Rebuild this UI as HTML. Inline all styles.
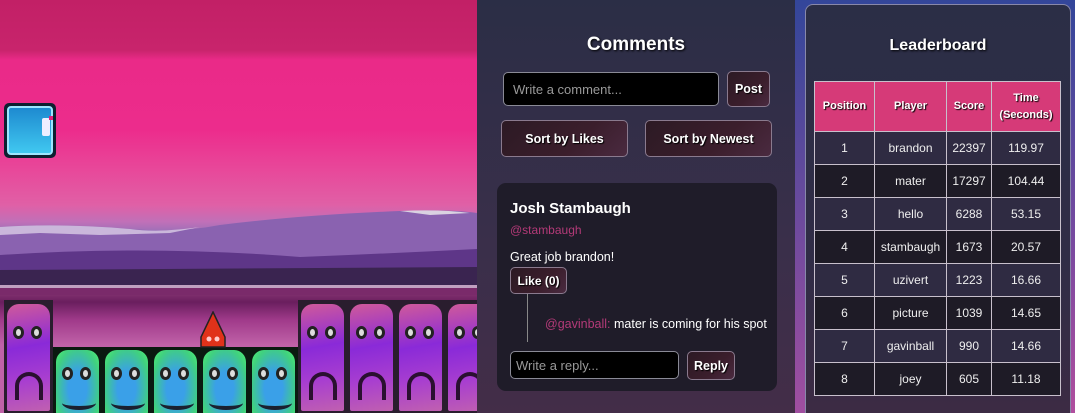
<!DOCTYPE html>
<html><head><style>
*{margin:0;padding:0;box-sizing:border-box}
html,body{width:1075px;height:413px;overflow:hidden}
body{position:relative;font-family:"Liberation Sans",sans-serif;background:linear-gradient(180deg,#33469a 0%,#7a4aa0 60%,#b04e9e 100%)}
.abs{position:absolute}
#game{left:0;top:0;width:477px;height:413px;overflow:hidden;background:linear-gradient(180deg,#c22066 0px,#c8246c 50px,#ea2a88 60px,#ec2c8c 130px,#e8489a 170px,#e060a6 205px,#c070b8 222px,#9070b8 235px,#6a3f8e 260px,#4a2a62 275px,#3a2450 288px,#b89ab8 291px,#80306e 294px,#6a1e5e 302px,#a03a8a 320px,#c062a8 345px)}
.pt{position:absolute;width:49px;height:115px;top:300px;background:#2a1d2e;padding:4px 3px}
.pt>div{width:100%;height:100%;border-radius:12px 12px 2px 2px;background:linear-gradient(170deg,#d05a9a,#8a2ad8 40%,#a83ed0 70%,#c060b0);position:relative}
.gt{position:absolute;width:49px;height:70px;top:347px;background:#0a1a10;padding:3px}
.gt>div{width:100%;height:100%;border-radius:12px 12px 2px 2px;background:radial-gradient(ellipse at 50% 60%,#3aa0e8 30%,#40d080 75%,#50f070);position:relative}
.eye{position:absolute;width:11px;height:13px;border-radius:50%;background:#ddd;border:3px solid #222}
.frown{position:absolute;left:8px;top:68px;width:28px;height:28px;border:4px solid #2a1030;border-bottom:none;border-radius:50% 50% 0 0}
.smile{position:absolute;left:6px;top:46px;width:34px;height:14px;border-bottom:4px solid #1a2030;border-radius:0 0 50% 50%}
#cm{left:477px;top:0;width:318px;height:413px;background:linear-gradient(180deg,#2b2e46,#3a2f4a 60%,#432d48)}
#lb{left:805px;top:4px;width:266px;height:420px;border:1px solid #8888aa;border-radius:8px;background:linear-gradient(180deg,#2b2e46,#302c46 60%,#3d2b44)}
h2{color:#fff;font-weight:900;font-size:19px;text-align:center;text-shadow:1px 1px 2px #000}
.btn{position:absolute;border:1px solid #8a7a8e;border-radius:5px;color:#fff;font-size:12.5px;font-weight:bold;display:flex;align-items:center;justify-content:center;background:linear-gradient(135deg,#2c1a24,#3b1e2c 60%,#4a2a40);text-shadow:1px 1px 1px #000}
.inp{position:absolute;background:#000;border:1px solid #8a8a96;border-radius:5px;color:#999;font-size:13px;padding-left:9px;display:flex;align-items:center}
table{border-collapse:collapse;position:absolute;left:8px;top:76px;width:247px;font-size:12px;color:#eee;text-align:center}
td,th{border:1px solid #c8c0cc;height:33px}
th{background:#d63a78;color:#fff;font-size:11px;font-weight:900;height:50px;text-shadow:1px 1px 1px #000;line-height:17px}
tr:nth-child(even) td{background:#2f2b42}
tr:nth-child(odd) td{background:#1e1b26}
</style></head><body>
<div id="game" class="abs">
<svg class="abs" style="left:0;top:205px" width="477" height="90"><path d="M0 22 Q60 18 130 24 Q180 28 220 20 Q300 10 400 6 Q450 4 477 8 L477 90 L0 90 Z" fill="#8a62b0"/><path d="M0 22 Q60 18 130 24 Q160 28 200 22 L170 28 L100 30 L40 28 L0 30Z" fill="#e6dcee" opacity=".7"/><path d="M400 6 Q440 4 470 8 L430 10Z" fill="#eee" opacity=".8"/><path d="M0 50 Q150 40 300 52 Q400 48 477 44 L477 90 L0 90Z" fill="#5e3688"/><path d="M0 65 L477 62 L477 90 L0 90Z" fill="#3a2450"/><rect x="0" y="80" width="477" height="3" fill="#c0a0c0"/><rect x="0" y="83" width="477" height="7" fill="#7a2a6a"/></svg>
<div class="abs" style="left:4px;top:103px;width:52px;height:55px;border-radius:5px;background:#0c2030;padding:3px"><div style="width:100%;height:100%;border-radius:4px;background:linear-gradient(180deg,#1e8ad0,#40c8f0);border:2px solid #9ee6ff;position:relative"><div style="position:absolute;left:33px;top:10px;width:8px;height:18px;background:#eef;border-radius:2px"></div><div style="position:absolute;left:40px;top:8px;width:4px;height:4px;background:#e0207a"></div></div></div>
<div class="pt" style="left:4px"><div><div class="eye" style="left:6px;top:22px"></div><div class="eye" style="left:24px;top:22px"></div><div class="frown"></div></div></div>
<div class="pt" style="left:298px"><div><div class="eye" style="left:6px;top:22px"></div><div class="eye" style="left:24px;top:22px"></div><div class="frown"></div></div></div>
<div class="pt" style="left:347px"><div><div class="eye" style="left:6px;top:22px"></div><div class="eye" style="left:24px;top:22px"></div><div class="frown"></div></div></div>
<div class="pt" style="left:396px"><div><div class="eye" style="left:6px;top:22px"></div><div class="eye" style="left:24px;top:22px"></div><div class="frown"></div></div></div>
<div class="pt" style="left:445px"><div><div class="eye" style="left:6px;top:22px"></div><div class="eye" style="left:24px;top:22px"></div><div class="frown"></div></div></div>
<div class="gt" style="left:53px"><div><div class="eye" style="left:6px;top:17px"></div><div class="eye" style="left:24px;top:17px"></div><div class="smile"></div></div></div>
<div class="gt" style="left:102px"><div><div class="eye" style="left:6px;top:17px"></div><div class="eye" style="left:24px;top:17px"></div><div class="smile"></div></div></div>
<div class="gt" style="left:151px"><div><div class="eye" style="left:6px;top:17px"></div><div class="eye" style="left:24px;top:17px"></div><div class="smile"></div></div></div>
<div class="gt" style="left:200px"><div><div class="eye" style="left:6px;top:17px"></div><div class="eye" style="left:24px;top:17px"></div><div class="smile"></div></div></div>
<div class="gt" style="left:249px"><div><div class="eye" style="left:6px;top:17px"></div><div class="eye" style="left:24px;top:17px"></div><div class="smile"></div></div></div>
<svg class="abs" style="left:199px;top:311px" width="28" height="37"><path d="M14 1 L26 26 L26 36 L2 36 L2 26 Z" fill="#e0321a" stroke="#222" stroke-width="1.5"/><circle cx="10" cy="28" r="2.5" fill="#fcc"/><circle cx="18" cy="28" r="2.5" fill="#fcc"/></svg>
</div>
<div class="abs" style="left:795px;top:0;width:10px;height:413px;background:linear-gradient(180deg,#33469a,#a04ea0)"></div>
<div id="cm" class="abs">
<h2 class="abs" style="left:0;width:318px;top:34px">Comments</h2>
<div class="inp" style="left:26px;top:72px;width:216px;height:34px">Write a comment...</div>
<div class="btn" style="left:250px;top:71px;width:43px;height:36px">Post</div>
<div class="btn" style="left:24px;top:120px;width:127px;height:37px">Sort by Likes</div>
<div class="btn" style="left:168px;top:120px;width:127px;height:37px">Sort by Newest</div>
<div class="abs" style="left:20px;top:183px;width:280px;height:208px;background:#1f1c29;border-radius:9px">
<div class="abs" style="left:13px;top:17px;color:#fff;font-weight:900;font-size:15px">Josh Stambaugh</div>
<div class="abs" style="left:13px;top:40px;color:#b43a78;font-size:12px">@stambaugh</div>
<div class="abs" style="left:13px;top:67px;color:#fff;font-size:12.5px">Great job brandon!</div>
<div class="btn" style="left:13px;top:84px;width:57px;height:27px;font-size:12px">Like (0)</div>
<div class="abs" style="left:30px;top:111px;width:1px;height:48px;background:#888"></div>
<div class="abs" style="left:48px;top:134px;color:#fff;font-size:12.5px"><span style="color:#b43a78">@gavinball:</span> mater is coming for his spot</div>
<div class="inp" style="left:13px;top:168px;width:169px;height:28px;font-size:13px;padding-left:5px">Write a reply...</div>
<div class="btn" style="left:190px;top:168px;width:48px;height:29px">Reply</div>
</div>
</div>
<div id="lb" class="abs">
<h2 class="abs" style="left:0;width:264px;top:32px;font-size:16px">Leaderboard</h2>
<table>
<tr><th style="width:60px">Position</th><th style="width:72px">Player</th><th style="width:45px">Score</th><th>Time<br>(Seconds)</th></tr>
<tr><td>1</td><td>brandon</td><td>22397</td><td>119.97</td></tr>
<tr><td>2</td><td>mater</td><td>17297</td><td>104.44</td></tr>
<tr><td>3</td><td>hello</td><td>6288</td><td>53.15</td></tr>
<tr><td>4</td><td>stambaugh</td><td>1673</td><td>20.57</td></tr>
<tr><td>5</td><td>uzivert</td><td>1223</td><td>16.66</td></tr>
<tr><td>6</td><td>picture</td><td>1039</td><td>14.65</td></tr>
<tr><td>7</td><td>gavinball</td><td>990</td><td>14.66</td></tr>
<tr><td>8</td><td>joey</td><td>605</td><td>11.18</td></tr>
</table>
</div>
</body></html>
